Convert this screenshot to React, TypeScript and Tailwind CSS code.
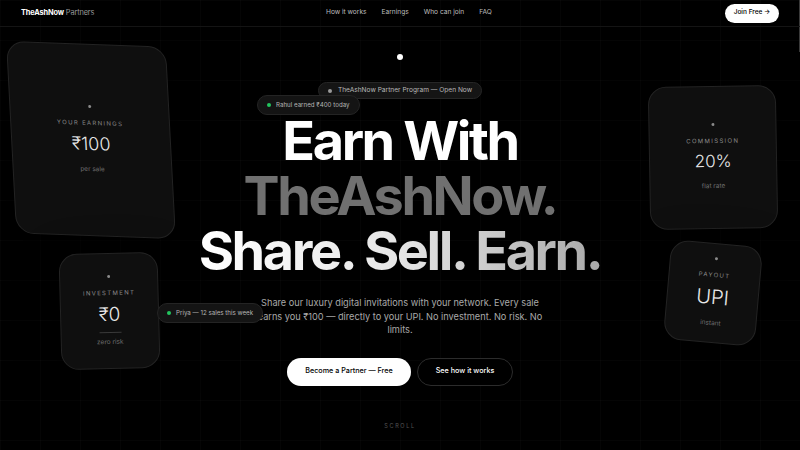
import React from "react";

type CardProps = {
  label: string;
  value: string;
  note: string;
  divider?: boolean;
  className: string;
  valueClass?: string;
};

function StatCard({ label, value, note, divider, className, valueClass = "text-[18px]" }: CardProps) {
  return (
    <div
      className={`absolute flex flex-col items-center justify-center rounded-[18px] border border-[#232323] bg-[#0f0f0f] shadow-[0_10px_40px_rgba(0,0,0,0.6)] ${className}`}
    >
      <span className="mb-[10px] h-[3px] w-[3px] rounded-full bg-[#8a8a8a]" />
      <span className="text-[6px] tracking-[0.22em] text-[#8a8a8a]">{label}</span>
      <span className={`mt-[8px] font-light leading-none text-[#e8e8e8] ${valueClass}`}>{value}</span>
      {divider && <span className="mt-[8px] h-px w-[22px] bg-[#3a3a3a]" />}
      <span className={`${divider ? "mt-[5px]" : "mt-[12px]"} text-[6.5px] text-[#6e6e6e]`}>{note}</span>
    </div>
  );
}

function Pill({ text, dot, className }: { text: string; dot: string; className: string }) {
  return (
    <div
      className={`absolute flex items-center gap-[5px] rounded-full border border-[#242424] bg-[#141414] px-[9px] text-[6.2px] text-[#b5b5b5] ${className}`}
    >
      <span className={`h-[4px] w-[4px] rounded-full ${dot}`} />
      {text}
    </div>
  );
}

export default function App() {
  return (
    <div className="relative h-[450px] w-[800px] overflow-hidden bg-black font-['Inter',sans-serif] text-white">
      {/* faint grid */}
      <div className="pointer-events-none absolute inset-0 bg-[linear-gradient(rgba(255,255,255,0.018)_1px,transparent_1px),linear-gradient(90deg,rgba(255,255,255,0.018)_1px,transparent_1px)] bg-[size:40px_40px]" />

      <nav className="relative z-10 flex h-[27px] items-center justify-between border-b border-[#141414] pl-[21px] pr-[21px]">
        <div className="text-[7.4px] tracking-[-0.02em]">
          <span className="font-bold text-white">TheAshNow</span>
          <span className="text-[#9a9a9a]"> Partners</span>
        </div>
        <div className="absolute left-[326px] flex items-center gap-[15px] text-[6.6px] text-[#bdbdbd]">
          <span>How it works</span>
          <span>Earnings</span>
          <span>Who can join</span>
          <span>FAQ</span>
        </div>
        <button className="h-[19px] w-[54px] rounded-full bg-white text-[6.5px] font-medium text-black">
          Join Free →
        </button>
      </nav>

      <div className="absolute right-0 top-0 h-[52px] w-px bg-[#3a3a3a]" />

      <StatCard
        label="YOUR EARNINGS"
        value="₹100"
        note="per sale"
        className="left-[11px] top-[44px] h-[192px] w-[160px] [transform:rotate(2deg)_skewX(5deg)]"
      />
      <StatCard
        label="INVESTMENT"
        value="₹0"
        note="zero risk"
        divider
        valueClass="text-[19px]"
        className="left-[60px] top-[253px] h-[116px] w-[99px] [transform:rotate(-1.5deg)]"
      />
      <StatCard
        label="COMMISSION"
        value="20%"
        note="flat rate"
        valueClass="text-[17px]"
        className="left-[649px] top-[86px] h-[143px] w-[128px] [transform:rotate(-1deg)]"
      />
      <StatCard
        label="PAYOUT"
        value="UPI"
        note="instant"
        valueClass="text-[20px]"
        className="left-[667px] top-[243px] h-[100px] w-[92px] [transform:rotate(5deg)]"
      />

      <main className="relative flex flex-col items-center">
        <span className="mt-[27px] h-[6px] w-[6px] rounded-full bg-white" />
        <div className="mt-[22px] flex h-[17px] items-center gap-[6px] rounded-full border border-[#262626] bg-[#151515] px-[9px] text-[6.6px] text-[#b8b8b8]">
          <span className="h-[4px] w-[4px] rounded-full bg-[#9a9a9a]" />
          TheAshNow Partner Program — Open Now
        </div>

        <h1 className="mt-[14px] text-center text-[54px] font-bold leading-[55px] tracking-[-0.045em]">
          <span className="block text-white">Earn With</span>
          <span className="block text-[#707070]">TheAshNow.</span>
          <span className="block bg-gradient-to-r from-white via-[#e6e6e6] to-[#a9a9a9] bg-clip-text pb-[2px] text-transparent">
            Share. Sell. Earn.
          </span>
        </h1>

        <p className="mt-[16px] w-[290px] text-center text-[9.2px] leading-[13.6px] text-[#a9a9a9]">
          Share our luxury digital invitations with your network. Every sale earns you ₹100 — directly to your UPI. No investment. No risk. No limits.
        </p>

        <div className="mt-[21px] flex gap-[6px]">
          <button className="h-[28px] w-[124px] rounded-full bg-white text-[7.2px] font-medium text-black">
            Become a Partner — Free
          </button>
          <button className="h-[28px] w-[96px] rounded-full border border-[#2c2c2c] bg-black text-[7.2px] font-medium text-white">
            See how it works
          </button>
        </div>

        <span className="mt-[36px] text-[5.5px] tracking-[0.3em] text-[#555]">SCROLL</span>
      </main>

      <Pill text="Rahul earned ₹400 today" dot="bg-[#22c55e]" className="left-[257px] top-[95px] h-[20px]" />
      <Pill text="Priya — 12 sales this week" dot="bg-[#22c55e]" className="left-[157px] top-[303px] h-[20px]" />
    </div>
  );
}
